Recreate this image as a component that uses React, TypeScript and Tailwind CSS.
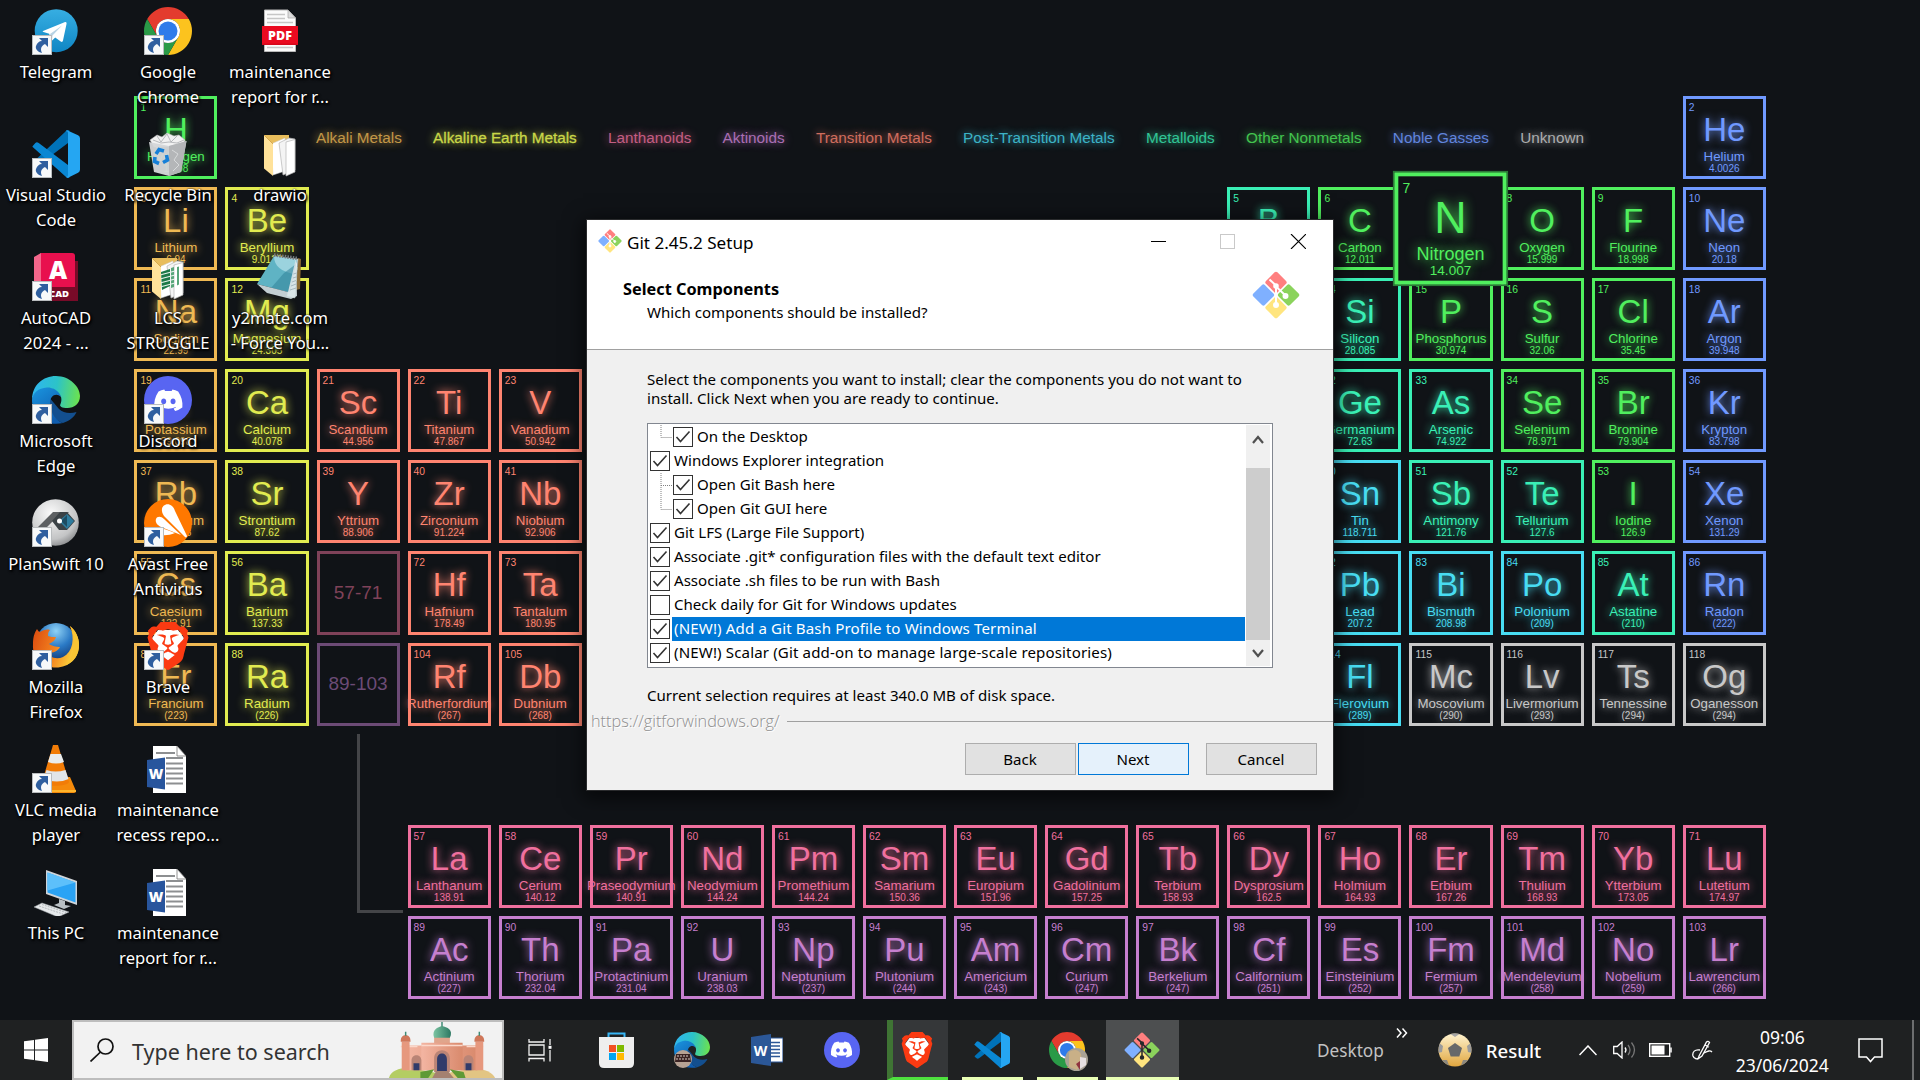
import type { ReactNode } from "react";
import { FaDiscord } from "react-icons/fa6";
import { SiBrave } from "react-icons/si";

type Kind = "alkali" | "earth" | "trans" | "lanth" | "act" | "post" | "metalloid" | "nonmetal" | "noble" | "unknown";

const tone: Record<Kind, string> = {
  alkali: "text-[#efb953]",
  earth: "text-[#e1eb50]",
  trans: "text-[#ff8470]",
  lanth: "text-[#f0709e]",
  act: "text-[#c67fcf]",
  post: "text-[#48dcf2]",
  metalloid: "text-[#3af0b6]",
  nonmetal: "text-[#50ef5e]",
  noble: "text-[#7099ff]",
  unknown: "text-[#c8c8c8]",
};

type El = [number, string, string, string, Kind];

const series = (first: number, kind: Kind, list: [string, string, string][]): El[] =>
  list.map(([s, n, m], i) => [first + i, s, n, m, kind]);

const lanthanoids = series(57, "lanth", [["La", "Lanthanum", "138.91"], ["Ce", "Cerium", "140.12"], ["Pr", "Praseodymium", "140.91"], ["Nd", "Neodymium", "144.24"], ["Pm", "Promethium", "144.24"], ["Sm", "Samarium", "150.36"], ["Eu", "Europium", "151.96"], ["Gd", "Gadolinium", "157.25"], ["Tb", "Terbium", "158.93"], ["Dy", "Dysprosium", "162.5"], ["Ho", "Holmium", "164.93"], ["Er", "Erbium", "167.26"], ["Tm", "Thulium", "168.93"], ["Yb", "Ytterbium", "173.05"], ["Lu", "Lutetium", "174.97"]]);
const actinoids = series(89, "act", [["Ac", "Actinium", "(227)"], ["Th", "Thorium", "232.04"], ["Pa", "Protactinium", "231.04"], ["U", "Uranium", "238.03"], ["Np", "Neptunium", "(237)"], ["Pu", "Plutonium", "(244)"], ["Am", "Americium", "(243)"], ["Cm", "Curium", "(247)"], ["Bk", "Berkelium", "(247)"], ["Cf", "Californium", "(251)"], ["Es", "Einsteinium", "(252)"], ["Fm", "Fermium", "(257)"], ["Md", "Mendelevium", "(258)"], ["No", "Nobelium", "(259)"], ["Lr", "Lawrencium", "(266)"]]);

/* A number is a run of empty columns, a string is a placeholder cell. */
const rows: (El | number | string)[][] = [
  [[1, "H", "Hydrogen", "1.008", "nonmetal"], 16, [2, "He", "Helium", "4.0026", "noble"]],
  [[3, "Li", "Lithium", "6.94", "alkali"], [4, "Be", "Beryllium", "9.0122", "earth"], 10, [5, "B", "Boron", "10.81", "metalloid"], [6, "C", "Carbon", "12.011", "nonmetal"], [7, "N", "Nitrogen", "14.007", "nonmetal"], [8, "O", "Oxygen", "15.999", "nonmetal"], [9, "F", "Flourine", "18.998", "nonmetal"], [10, "Ne", "Neon", "20.18", "noble"]],
  [[11, "Na", "Sodium", "22.99", "alkali"], [12, "Mg", "Magnesium", "24.305", "earth"], 11, [14, "Si", "Silicon", "28.085", "metalloid"], [15, "P", "Phosphorus", "30.974", "nonmetal"], [16, "S", "Sulfur", "32.06", "nonmetal"], [17, "Cl", "Chlorine", "35.45", "nonmetal"], [18, "Ar", "Argon", "39.948", "noble"]],
  [[19, "K", "Potassium", "39.098", "alkali"], [20, "Ca", "Calcium", "40.078", "earth"], [21, "Sc", "Scandium", "44.956", "trans"], [22, "Ti", "Titanium", "47.867", "trans"], [23, "V", "Vanadium", "50.942", "trans"], 8, [32, "Ge", "Germanium", "72.63", "metalloid"], [33, "As", "Arsenic", "74.922", "metalloid"], [34, "Se", "Selenium", "78.971", "nonmetal"], [35, "Br", "Bromine", "79.904", "nonmetal"], [36, "Kr", "Krypton", "83.798", "noble"]],
  [[37, "Rb", "Rubidium", "85.468", "alkali"], [38, "Sr", "Strontium", "87.62", "earth"], [39, "Y", "Yttrium", "88.906", "trans"], [40, "Zr", "Zirconium", "91.224", "trans"], [41, "Nb", "Niobium", "92.906", "trans"], 8, [50, "Sn", "Tin", "118.711", "post"], [51, "Sb", "Antimony", "121.76", "metalloid"], [52, "Te", "Tellurium", "127.6", "metalloid"], [53, "I", "Iodine", "126.9", "nonmetal"], [54, "Xe", "Xenon", "131.29", "noble"]],
  [[55, "Cs", "Caesium", "132.91", "alkali"], [56, "Ba", "Barium", "137.33", "earth"], "57-71", [72, "Hf", "Hafnium", "178.49", "trans"], [73, "Ta", "Tantalum", "180.95", "trans"], 8, [82, "Pb", "Lead", "207.2", "post"], [83, "Bi", "Bismuth", "208.98", "post"], [84, "Po", "Polonium", "(209)", "post"], [85, "At", "Astatine", "(210)", "metalloid"], [86, "Rn", "Radon", "(222)", "noble"]],
  [[87, "Fr", "Francium", "(223)", "alkali"], [88, "Ra", "Radium", "(226)", "earth"], "89-103", [104, "Rf", "Rutherfordium", "(267)", "trans"], [105, "Db", "Dubnium", "(268)", "trans"], 8, [114, "Fl", "Flerovium", "(289)", "post"], [115, "Mc", "Moscovium", "(290)", "unknown"], [116, "Lv", "Livermorium", "(293)", "unknown"], [117, "Ts", "Tennessine", "(294)", "unknown"], [118, "Og", "Oganesson", "(294)", "unknown"]],
  [2, "bracket", 15],
  [2, ...lanthanoids],
  [3, ...actinoids],
];

const legend: [string, string][] = [
  ["Alkali Metals", "text-[#efb953] opacity-80"],
  ["Alkaline Earth Metals", "text-[#c9d748] [-webkit-text-stroke:0.3px_currentColor]"],
  ["Lanthanoids", "text-[#f0709e] opacity-80"],
  ["Aktinoids", "text-[#c67fcf] opacity-85"],
  ["Transition Metals", "text-[#ff8470] opacity-80"],
  ["Post-Transition Metals", "text-[#48dcf2] opacity-80"],
  ["Metalloids", "text-[#3af0b6] opacity-80"],
  ["Other Nonmetals", "text-[#50ef5e] opacity-80"],
  ["Noble Gasses", "text-[#7099ff] opacity-85"],
  ["Unknown", "text-[#c8c8c8] opacity-85"],
];

function Cell({ el }: { el: El }) {
  const [n, sym, name, mass, kind] = el;
  const active = sym === "N";
  return (
    <div
      className={`${tone[kind]} flex min-w-0 flex-col border-3 border-current bg-[#101317] text-center whitespace-nowrap ${active ? "relative z-10 scale-[1.355] outline-1 outline-[#2c7a38]" : ""}`}
    >
      <div className="h-3 pl-[3px] text-left text-[10.3px] leading-[17px]">{n}</div>
      <div className="text-[33px] leading-[38px] [text-shadow:0_0_9px_currentColor]">{sym}</div>
      <div className="flex justify-center text-[13.3px] leading-[15px] [text-shadow:0_0_9px_currentColor]">
        <span>{name}</span>
      </div>
      <div className="text-[10px] leading-[10px] [text-shadow:0_0_9px_currentColor]">{mass}</div>
    </div>
  );
}

const spans: Record<number, string> = {
  2: "col-span-2",
  3: "col-span-3",
  8: "col-span-8",
  10: "col-span-10",
  11: "col-span-11",
  15: "col-span-15",
  16: "col-span-16",
};

function PeriodicTable() {
  return (
    <div className="absolute top-[96px] left-[134.4px] h-[903px] w-[1631.4px] font-['Liberation_Sans',sans-serif]">
      <div className="grid h-full grid-cols-18 grid-rows-10 gap-2">
        {rows.map((r, i) =>
          r.map((c, j) => {
            const key = `${i}-${j}`;
            if (typeof c === "number") return <div key={key} className={spans[c]} />;
            if (c === "bracket")
              return <div key={key} className="row-span-2 mr-[-3px] mb-[-5px] ml-[40px] border-b-3 border-l-3 border-[#444548]" />;
            if (typeof c === "string")
              return (
                <div
                  key={key}
                  className={`flex items-center justify-center border-3 border-current text-[19px] ${c === "57-71" ? "text-[#7f4259]" : "text-[#6c4b76]"}`}
                >
                  {c}
                </div>
              );
            return <Cell key={key} el={c} />;
          }),
        )}
      </div>
      <div className="absolute top-[31px] left-[181.6px] flex w-[1268px] justify-between text-[15.3px] leading-[22px] whitespace-nowrap">
        {legend.map(([t, c]) => (
          <span key={t} className={`${c} [text-shadow:0_0_8px_currentColor]`}>
            {t}
          </span>
        ))}
      </div>
    </div>
  );
}

/* ---------- icons ---------- */

function Svg({ children, className = "size-12", box = "0 0 48 48" }: { children: ReactNode; className?: string; box?: string }) {
  return (
    <svg viewBox={box} className={className}>
      {children}
    </svg>
  );
}

function Telegram() {
  return (
    <Svg>
      <defs>
        <linearGradient id="tg" x1="0" y1="0" x2="0" y2="1">
          <stop offset="0" stopColor="#37aee2" />
          <stop offset="1" stopColor="#0f86c4" />
        </linearGradient>
      </defs>
      <circle cx="24.2" cy="23.7" r="21.5" fill="url(#tg)" />
      <path d="M11 24 32.5 15.2c1.6-.6 2.3.2 2 1.7L31 33.6c-.3 1.4-1.2 1.6-2.3.9l-5.5-4-2.8 2.7c-.6.6-1.3.5-1.5-.4l-1.7-6-5.7-1.7c-1-.3-1-.8-.5-1.1Z" fill="#fff" />
      <path d="m18 27 12-8.5-9.5 10-.5 4.500Z" fill="#b8d3e4" />
    </Svg>
  );
}

function Chrome({ className = "size-12" }: { className?: string }) {
  return (
    <Svg className={className}>
      <path d="M24 12H44.78A24 24 0 0 0 3.22 12L13.61 30A12 12 0 0 1 24 12Z" fill="#e33b2e" />
      <path d="M44.78 12A24 24 0 0 1 24 48L34.39 30A12 12 0 0 0 24 12Z" fill="#fcc31e" />
      <path d="M24 48A24 24 0 0 1 3.22 12L13.61 30A12 12 0 0 0 34.39 30Z" fill="#2a9a47" />
      <circle cx="24" cy="24" r="12" fill="#fff" />
      <circle cx="24" cy="24" r="9.5" fill="#2f7bea" />
    </Svg>
  );
}

function Pdf() {
  return (
    <Svg>
      <path d="M8.5 3H32l7.5 8v33.5h-31Z" fill="#fbfbfb" stroke="#b9b9b9" />
      <path d="M32 3v8h7.5Z" fill="#dcdcdc" stroke="#a5a5a5" strokeWidth=".7" />
      <path d="M11 7.5h18M11 11.5h18M11 15.5h26M11 40.5h26" stroke="#c6c6c6" strokeWidth="1.3" />
      <rect x="6" y="19" width="36" height="19" fill="#d6071b" />
      <rect x="6" y="19" width="36" height="17.5" fill="#ea0a20" />
      <text x="24" y="32.8" textAnchor="middle" fontSize="12.5" fontWeight="800" fill="#fff" fontFamily="Open Sans, sans-serif">PDF</text>
    </Svg>
  );
}

function VsCode({ className = "size-12" }: { className?: string }) {
  return (
    <Svg className={className} box="0 0 100 100">
      <path d="M2 67 71 2Q74-1 78 1L75 27 14 73Q10 75 7 73L2 69Z" fill="#0072b8" />
      <path d="M2 33 7 27Q10 24 14 27L75 73 78 99Q74 101 71 98L2 36Q0 35 2 33Z" fill="#0a87d3" />
      <path d="M74 1 96 11Q100 13 100 17V83Q100 87 96 89L76 99Q72 100 70 97 75 99 75 94V6Q75 1 70 3Q72 0 74 1Z" fill="#25a6f2" />
    </Svg>
  );
}

function RecycleBin() {
  return (
    <Svg>
      <path d="m6 10 7-5 5 2 5-4 7 3 5-1 6 5-2 6-29 1Z" fill="#f1f1f1" stroke="#bbb" strokeWidth=".6" />
      <path d="m13 6 4 6 6-8 4 8 6-6M9 10l8 3 8-1 8 1 7-3" stroke="#a8abae" strokeWidth=".8" fill="none" />
      <path d="m5 12 20 4 17.5-5-5.5 31-12 4-15-4Z" fill="#d4d6d8" opacity=".96" />
      <path d="m25 16 17.5-5-5.5 31-12 4Z" fill="#b4b6b8" />
      <path d="m28 20 6 4-4 6 5 5-6 6M11 16l5 4-4 5" stroke="#d8dadb" fill="none" />
      <g fill="none" stroke="#1680d8" strokeWidth="3.6">
        <path d="m12 24 3-4.500 5 1.500M22.500 25l1 5-4.500 2.500M15 33.500l-4.500-2 .5-4.500" />
      </g>
    </Svg>
  );
}

function Folder({ sheet = false }: { sheet?: boolean }) {
  return (
    <Svg>
      <path d="M8 5h25v34H16Z" fill="#e8bd5c" />
      <path d="m15 14 14-6v33l-12 4Z" fill="#fff" stroke="#ccc" strokeWidth=".5" />
      <path d="m23 13 10-5 6 1v31l-12 5Z" fill="#f4f4f4" stroke="#b5b5b5" strokeWidth=".7" />
      <path d="m30 12 9-2.500V42l-9 4Z" fill="#fff" stroke="#b5b5b5" strokeWidth=".7" />
      {sheet && (
        <>
          <path d="m17 19 9-3v17l-8 4Z" fill="#1d7a48" />
          <path d="m27 15 3-1v20l-3 1ZM33 14l2-.5v18l-2 1Z" fill="#58a67a" />
          <path d="m16 22 15-4M16 26l15-4M16 30l15-4M16 34l15-4" stroke="#e9f3ed" strokeWidth="1.2" />
        </>
      )}
      <path d="m8 5 9 9v32L8 38.500Z" fill="#ffe29a" />
      <path d="m8 5 9 9" stroke="#d6a94d" />
    </Svg>
  );
}

function AutoCad() {
  return (
    <Svg>
      <path d="m38 8 8 0v40H13V34Z" fill="#780b28" />
      <path d="M9 0h31q3 0 3 3v31H2V6Z" fill="#e8104e" />
      <path d="M2 4 9 0v34H2Z" fill="#f3668b" />
      <text x="26" y="26" textAnchor="middle" fontSize="25" fontWeight="800" fill="#fff" fontFamily="Open Sans, sans-serif">A</text>
      <text x="27" y="43.5" textAnchor="middle" fontSize="9.5" fontWeight="800" fill="#fff" fontFamily="Open Sans, sans-serif">CAD</text>
    </Svg>
  );
}

function Notepad() {
  return (
    <Svg>
      <path d="M42 5l3 1-1 30-4 1Z" fill="#8a6a35" />
      <path d="m17 3 25 3-3 39-8-2 8-34Z" fill="#e8edef" stroke="#9aa" strokeWidth=".6" />
      <path d="M18 3 41 7 32 39 1 31Z" fill="#5fb3c4" />
      <path d="M18 3 41 7l-4 14C26 18 18 14 18 3Z" fill="#9bd3de" />
      <path d="m28 20 12-9-6 28-19-4Z" fill="#2f8299" opacity=".55" />
      <path d="m1 31 31 8 8-34 1 38-6 3-24-6Z" fill="#d7e3e7" opacity=".9" />
      <path d="m35 33 5-2M36 29l4-1.500M37 25l3-1M37.500 21l3-1M34 37l6-2" stroke="#8fa5ad" strokeWidth=".7" />
      <path d="M18 2l24 3.500" stroke="#767c80" strokeWidth="3.5" strokeDasharray="1.5 1.2" />
    </Svg>
  );
}

function Edge({ className = "size-12", id = "e" }: { className?: string; id?: string }) {
  return (
    <Svg className={className}>
      <defs>
        <linearGradient id={`${id}1`} x1="0" y1=".4" x2="1" y2=".5">
          <stop offset="0" stopColor="#2fb5f0" />
          <stop offset=".5" stopColor="#2cc3c8" />
          <stop offset="1" stopColor="#6be24f" />
        </linearGradient>
        <linearGradient id={`${id}2`} x1="0" y1="0" x2=".6" y2="1">
          <stop offset="0" stopColor="#1a96e0" />
          <stop offset="1" stopColor="#0f5cae" />
        </linearGradient>
      </defs>
      <path d="M16 20C13 34 22 44 31 47 38 45 43 40 44.5 36 38 38 31 37 27 33Z" fill="#134f8f" />
      <path d="M0 24C1 14 9 10 17 11 25 12 29 17 29 21 24 16 18 20 18 27 18 37 25 46 31 47 13 51 0 39 0 24Z" fill={`url(#${id}2)`} />
      <path d="M0 24C0 9 11 0 24 0 38 0 48 11 48 20 48 28 42 32 35.5 32 30 32 27 30.5 28.5 28 32 21 26 11.5 15 11.5 6 12 1 17 0 24Z" fill={`url(#${id}1)`} />
    </Svg>
  );
}

function Discord({ className = "size-12" }: { className?: string }) {
  return (
    <div className={`${className} flex items-center justify-center rounded-full bg-[#5865f2] text-white`}>
      <FaDiscord className="size-[64%]" />
    </div>
  );
}

function PlanSwift() {
  return (
    <Svg>
      <defs>
        <radialGradient id="ps" cx=".4" cy=".3" r=".8">
          <stop offset="0" stopColor="#fafafa" />
          <stop offset=".7" stopColor="#c3c4c5" />
          <stop offset="1" stopColor="#77797b" />
        </radialGradient>
      </defs>
      <circle cx="23.5" cy="23.5" r="23.3" fill="url(#ps)" />
      <path d="m6 28 15-15h16l-5 5h-7l-10 10Z" fill="#5d6062" />
      <path d="m20 22 8-9h7l8 9-8 9h-8Z" fill="#3b4246" />
      <path d="m27 22 8-7 7 7-7 8Z" fill="#2e7c9e" />
      <path d="m29 22 6-6v12Z" fill="#1d4c62" />
      <circle cx="27.5" cy="22" r="2.5" fill="#fff" />
    </Svg>
  );
}

function Avast() {
  return (
    <Svg>
      <circle cx="24" cy="24" r="24" fill="#ff7800" />
      <path d="M18 12c-1-5 5-9 10-5 1 1 2 2 3 5l12 25c0 1-1 2-2 1L20 17c-1-2-2-3-2-5Z" fill="#fff" />
      <path d="M12 20c1-3 5-3 8 0l17 16-20-8c-4-2-6-5-5-8Z" fill="#fff" />
      <path d="M12 30c4-2 9 0 19 4-7 3-15 3-18 0Z" fill="#fff" />
    </Svg>
  );
}

function Firefox() {
  return (
    <Svg>
      <defs>
        <radialGradient id="ff" cx=".5" cy=".2" r=".8">
          <stop offset="0" stopColor="#8fd2f5" />
          <stop offset=".5" stopColor="#2a79c5" />
          <stop offset="1" stopColor="#12346f" />
        </radialGradient>
        <linearGradient id="ff2" x1="0" y1="0" x2="1" y2=".3">
          <stop offset="0" stopColor="#d9480f" />
          <stop offset=".6" stopColor="#f5851f" />
          <stop offset="1" stopColor="#fbd03c" />
        </linearGradient>
      </defs>
      <circle cx="24" cy="21" r="20" fill="url(#ff)" />
      <path d="M38 4c6 5 9 12 9 19 0 13-10 22.500-23 22.500S0 37 1 22C1 14 3 10 5 7c1 2 2 3 3 3 3-2 7-3 10-2-2 2-2 4-2 6 2 1 5 1 8 1-1 4-4 5-7 7 3 2 7 3 11 3-4 7-11 6-14 4 2 6 10 9 17 6 10-5 12-19 7-31Z" fill="url(#ff2)" />
      <path d="M38 4c6 5 9 12 9 19 0 10-5 17-13 20 8-8 11-26 4-39Z" fill="#f9c534" />
    </Svg>
  );
}

function Brave({ className = "size-12" }: { className?: string }) {
  return (
    <div className={`${className} relative shrink-0`}>
      <svg viewBox="0 0 24 24" className="size-full">
        <path d="M7 4h10l3 4-1.500 8-6.500 6-6.500-6L4 8Z" fill="#fff" />
      </svg>
      <SiBrave className="absolute inset-0 size-full text-[#fb3a12]" />
    </div>
  );
}

function Vlc() {
  return (
    <Svg>
      <path d="M7 33h5l-1 6h24l-2-7h5l6 14q0 2-2 2H6q-2 0-2-2Z" fill="#f58a0b" />
      <path d="M4 45h40l0 2H4Z" fill="#ffb52b" />
      <path d="M21 0h5l11 37c-2 5-25 5-27 0Z" fill="#f27c07" />
      <path d="m18.500 9 10.500 0 3 8q-8 3-16 0Z" fill="#e9ecee" />
      <path d="m14.500 25q9 3 19 0l3 9q-11 5-25 0Z" fill="#e1e5e8" />
    </Svg>
  );
}

function WordDoc() {
  return (
    <Svg>
      <path d="M9 0h24l9 10v37H9Z" transform="translate(0 1)" fill="#fff" />
      <path d="M33 1v10h9Z" fill="#fff" stroke="#777" strokeWidth=".8" />
      <path d="M12 8h19M22 13h17M22 18.500h17M22 23.500h17M22 28.500h17M22 33.500h17M22 38.500h17" stroke="#8d8f91" strokeWidth="2" />
      <path d="M3 15 21 12.500v32L3 42Z" fill="#28559d" />
      <text x="12" y="33.5" textAnchor="middle" fontSize="14" fontWeight="800" fill="#fff" fontFamily="Open Sans, sans-serif">W</text>
    </Svg>
  );
}

function ThisPc() {
  return (
    <Svg>
      <path d="m14 2 31 11v24L14 26Z" fill="#cfd5da" />
      <path d="m15.500 4.500 28 10v20l-28-10Z" fill="#2aa3f5" />
      <path d="m15.500 4.500 28 10-28 8Z" fill="#5dc0fb" />
      <path d="m27 31 6 2v4l6 1-7 3-10-4 5-2Z" fill="#b9c0c5" />
      <path d="m10 35 27 9-11 5L2 39Z" fill="#e6e9eb" stroke="#a3a9ad" strokeWidth=".5" />
      <path d="m7 38 24 8M10 36.500l24 8" stroke="#a9afb3" strokeWidth=".8" strokeDasharray="2 1" />
    </Svg>
  );
}

function GitLogo({ className = "size-12", line = "#fff" }: { className?: string; line?: string }) {
  return (
    <Svg className={className}>
      <g transform="rotate(45 24 24)">
        <rect x="7" y="7" width="16.2" height="16.2" rx="2" fill="#ff7f7f" />
        <rect x="7" y="24.8" width="16.2" height="16.2" rx="2" fill="#7fb0ff" />
        <rect x="24.8" y="7" width="16.2" height="16.2" rx="2" fill="#8bd35c" />
        <rect x="24.8" y="24.8" width="16.2" height="16.2" rx="2" fill="#ffe57f" />
      </g>
      <g stroke={line} fill={line} strokeWidth="2">
        <path d="m17.500 8.500 6.500 6v20M25 16.500l8.500 8" fill="none" />
        <circle cx="24" cy="15" r="1.8" />
        <circle cx="33.5" cy="25" r="2" />
        <circle cx="24" cy="34" r="2" />
      </g>
    </Svg>
  );
}

/* ---------- desktop ---------- */

type Shortcut = { icon: ReactNode; lines: string[]; link?: boolean };

const columns: Shortcut[][] = [
  [
    { icon: <Telegram />, lines: ["Telegram"], link: true },
    { icon: <VsCode />, lines: ["Visual Studio", "Code"], link: true },
    { icon: <AutoCad />, lines: ["AutoCAD", "2024 - ..."], link: true },
    { icon: <Edge id="de" />, lines: ["Microsoft", "Edge"], link: true },
    { icon: <PlanSwift />, lines: ["PlanSwift 10"], link: true },
    { icon: <Firefox />, lines: ["Mozilla", "Firefox"], link: true },
    { icon: <Vlc />, lines: ["VLC media", "player"], link: true },
    { icon: <ThisPc />, lines: ["This PC"] },
  ],
  [
    { icon: <Chrome />, lines: ["Google", "Chrome"], link: true },
    { icon: <RecycleBin />, lines: ["Recycle Bin"] },
    { icon: <Folder sheet />, lines: ["LCS", "STRUGGLE"] },
    { icon: <Discord />, lines: ["Discord"], link: true },
    { icon: <Avast />, lines: ["Avast Free", "Antivirus"], link: true },
    { icon: <Brave />, lines: ["Brave"], link: true },
    { icon: <WordDoc />, lines: ["maintenance", "recess repo..."] },
    { icon: <WordDoc />, lines: ["maintenance", "report for r..."] },
  ],
  [
    { icon: <Pdf />, lines: ["maintenance", "report for r..."] },
    { icon: <Folder />, lines: ["drawio"] },
    { icon: <Notepad />, lines: ["y2mate.com", "- Force You..."] },
  ],
];

function DesktopIcons() {
  return (
    <div className="absolute top-0 left-0 z-20 flex font-['Noto_Sans',sans-serif] text-[16.6px] leading-[25px] text-white">
      {columns.map((col, i) => (
        <div key={i} className="flex w-28 flex-col">
          {col.map((s, j) => (
            <div key={j} className="flex h-[123px] flex-col items-center pt-[7px]">
              <div className="relative flex size-12 justify-center">
                {s.icon}
                {s.link && (
                  <svg viewBox="0 0 20 20" className="absolute bottom-0 left-0 size-5">
                    <rect x=".5" y=".5" width="19" height="19" fill="#f7f9fa" stroke="#b9bcbe" />
                    <path d="M7 3h9v9l-3-3c-4 2-5 5-3 9-4-1-7-4-6-7 1-3 3-5 6-5Z" fill="#2f5f9f" />
                  </svg>
                )}
              </div>
              <div className="mt-[3.5px] text-center whitespace-nowrap [text-shadow:0_0_2px_#000,1px_1px_2px_#000,1px_2px_3px_#000]">
                {s.lines.map((l) => (
                  <div key={l}>{l}</div>
                ))}
              </div>
            </div>
          ))}
        </div>
      ))}
    </div>
  );
}

/* ---------- installer window ---------- */

const items: { t: string; child?: "mid" | "last"; off?: boolean; sel?: boolean }[] = [
  { t: "On the Desktop", child: "last" },
  { t: "Windows Explorer integration" },
  { t: "Open Git Bash here", child: "mid" },
  { t: "Open Git GUI here", child: "last" },
  { t: "Git LFS (Large File Support)" },
  { t: "Associate .git* configuration files with the default text editor" },
  { t: "Associate .sh files to be run with Bash" },
  { t: "Check daily for Git for Windows updates", off: true },
  { t: "(NEW!) Add a Git Bash Profile to Windows Terminal", sel: true },
  { t: "(NEW!) Scalar (Git add-on to manage large-scale repositories)" },
];

function Installer() {
  return (
    <div className="absolute top-[220px] left-[587px] z-30 flex h-[570px] w-[746px] flex-col bg-[#f0f0f0] font-['Noto_Sans',sans-serif] text-[15.08px] text-black shadow-[0_0_0_1px_#2a2b2d,0_4px_18px_4px_rgba(0,0,0,0.6)]">
      <div className="h-[130px] border-b border-[#a0a0a0] bg-white">
        <div className="flex h-[45px] items-center pr-[27px] pl-[11px]">
          <GitLogo className="mb-1 size-6" />
          <span className="ml-[5px] text-[17.1px] leading-[24px]">Git 2.45.2 Setup</span>
          <svg viewBox="0 0 155 15" className="mb-[2px] ml-auto h-[15px] w-[155px]" fill="none">
            <path d="M0 7.500h15" stroke="#000" />
            <rect x="69.5" y=".5" width="14" height="14" stroke="#c9c9c9" />
            <path d="m140 0 15 15m0-15-15 15" stroke="#000" strokeWidth="1.1" />
          </svg>
        </div>
        <div className="flex justify-between pr-[33px] pl-9">
          <div className="pt-[13px]">
            <div className="text-[16.3px] leading-[23px] font-bold">Select Components</div>
            <div className="pl-6 leading-[23px]">Which components should be installed?</div>
          </div>
          <GitLogo className="mt-[6px] size-12" />
        </div>
      </div>
      <div className="px-[60px] pt-5 leading-[19px] whitespace-nowrap">
        Select the components you want to install; clear the components you do not want to
        <br />
        install. Click Next when you are ready to continue.
      </div>
      <div className="mt-[15px] ml-[60px] flex h-[245px] w-[626px] border border-[#828790] bg-white p-px pr-[2px]">
        <div className="flex flex-1 flex-col pr-px">
          {items.map((it) => (
            <div key={it.t} className="flex h-6 items-center">
              {it.child && (
                <svg viewBox="0 0 23 24" className="-mr-px h-6 w-[24px] shrink-0" fill="none" stroke="#808080" strokeDasharray="1 1">
                  <path d={it.child === "mid" ? "M11.500 0v24M11.500 12.500H23" : "M11.500 0v12.500H23"} />
                </svg>
              )}
              <svg viewBox="0 0 20 20" className="ml-px size-5 shrink-0" fill="none">
                <rect x=".5" y=".5" width="19" height="19" fill="#fff" stroke="#333" />
                {!it.off && <path d="m3.500 10 4 4.500 9-10" stroke="#333" strokeWidth="1.6" />}
              </svg>
              <span className={`ml-[2px] flex h-6 items-center pb-px pl-[2px] whitespace-nowrap ${it.t.startsWith("(NEW") ? "tracking-[0.13px]" : ""} ${it.sel ? "flex-1 bg-[#0078d7] text-white" : ""}`}>{it.t}</span>
            </div>
          ))}
        </div>
        <div className="flex w-6 flex-col items-center bg-[#f0f0f0]">
          <svg viewBox="0 0 24 43" className="h-[43px] w-6">
            <path d="m7 18 5-6 5 6" fill="none" stroke="#505050" strokeWidth="2.2" />
          </svg>
          <div className="h-[172px] w-6 bg-[#cdcdcd]" />
          <svg viewBox="0 0 24 26" className="h-[26px] w-6">
            <path d="m7 10 5 6 5-6" fill="none" stroke="#505050" strokeWidth="2.2" />
          </svg>
        </div>
      </div>
      <div className="mt-[17px] pl-[60px] leading-[20px]">Current selection requires at least 340.0 MB of disk space.</div>
      <div className="mt-[6px] flex items-center pl-1">
        <span className="font-['Open_Sans',sans-serif] text-[16.3px] leading-[20px] font-light text-[#8f8f8f] [text-shadow:1px_1px_0_#fff]">https://gitforwindows.org/</span>
        <div className="ml-[7px] h-px flex-1 bg-[#a0a0a0]" />
      </div>
      <div className="mt-[12px] flex justify-end pr-4">
        <button className="h-8 w-[111px] border border-[#adadad] bg-[#e1e1e1] pr-px">Back</button>
        <button className="ml-[2px] h-8 w-[111px] border border-[#0078d7] bg-[#e5f1fb] pr-px">Next</button>
        <button className="ml-[17px] h-8 w-[111px] border border-[#adadad] bg-[#e1e1e1] pr-px">Cancel</button>
      </div>
    </div>
  );
}

/* ---------- taskbar ---------- */

function Mosque() {
  return (
    <svg viewBox="0 0 108 57" className="mt-auto h-[57px] w-[108px]">
      <defs>
        <linearGradient id="wall" x1="0" x2="1">
          <stop offset="0" stopColor="#f3b5a2" />
          <stop offset="1" stopColor="#d98a6d" />
        </linearGradient>
        <linearGradient id="dome" x1="0" x2="1">
          <stop offset="0" stopColor="#7cc4a2" />
          <stop offset="1" stopColor="#2c7862" />
        </linearGradient>
      </defs>
      <path d="M0 57C2 49 12 46 24 47l30 6v4Z" fill="#b4cd63" />
      <path d="M108 57c-3-7-14-11-28-9l-26 5v4Z" fill="#e2c583" />
      <path d="M54 0v8" stroke="#3d8a74" strokeWidth="1.5" />
      <path d="M46 15h16v7H46Z" fill="#e0a58c" />
      <path d="M46 16c-3-8 4-11 8-12 5 1 12 4 8 12Z" fill="url(#dome)" />
      <path d="M18 24h72v25H18Z" fill="url(#wall)" />
      <path d="M33 21h42v28H33Z" fill="url(#wall)" />
      <path d="M12 25h17M79 25h17M33 24h42" stroke="#fbd8ca" strokeWidth="1.5" />
      <path d="M13 20h8v29h-8ZM88 20h8v29h-8Z" fill="#e6987e" />
      <path d="M12 20c0-5 2-6 5-7 3 1 5 2 5 7ZM87 20c0-5 2-6 5-7 3 1 5 2 5 7Z" fill="#cf775a" />
      <path d="M17 10v4M92 10v4" stroke="#3d8a74" strokeWidth="1.5" />
      <path d="M46 51V37c0-11 16-11 16 0v14ZM23 49V39c0-7 10-7 10 0v10ZM76 49V39c0-7 10-7 10 0v10Z" fill="#b98476" />
      <path d="M49 51V38c0-8 10-8 10 0v13ZM25 49v-7h6v7ZM78 49v-7h6v7Z" fill="#303b6a" />
      <path d="M44 57l4-7h12l6 7Z" fill="#a48170" />
      <path d="m32 51 14-3-6 9h-8ZM76 51l-14-3 8 9h8Z" fill="#5f9a35" />
    </svg>
  );
}

function Taskbar() {
  return (
    <div className="absolute bottom-0 left-0 z-40 flex h-[60px] w-full items-center bg-[#1f2122] font-['Noto_Sans',sans-serif] text-white">
      <div className="flex w-[72px] justify-center">
        <svg viewBox="0 0 24 24" className="size-6" fill="#fff">
          <path d="M0 3.300 10 2v9.500H0ZM11 1.800 24 0v11.500H11ZM0 12.500h10V22L0 20.700ZM11 12.500h13V24l-13-1.800Z" />
        </svg>
      </div>
      <div className="flex h-full w-[432px] items-center border-2 border-[#bdbdbd] bg-[#f2f2f2] pl-4">
        <svg viewBox="0 0 24 24" className="size-6" fill="none" stroke="#111" strokeWidth="1.7">
          <circle cx="15.5" cy="8.5" r="7.5" />
          <path d="M10.500 14 .5 23.500" />
        </svg>
        <span className="mt-[4px] ml-[18px] text-[21.5px] text-[#333]">Type here to search</span>
        <div className="mr-[6px] ml-auto flex h-full flex-col">
          <Mosque />
        </div>
      </div>
      <svg viewBox="0 0 24 24" className="ml-[24px] size-6" fill="none" stroke="#f2f2f2" strokeWidth="1.3">
        <path d="M1 1v3h15V1M1 23.500v-3h15v3M1 7h15v10H1ZM22 1v6M22 12v11.500" />
        <rect x="20.5" y="7.8" width="3" height="3" fill="#fff" stroke="none" />
      </svg>
      <svg viewBox="0 0 35 36" className="ml-[47px] h-9 w-[35px]">
        <path d="M9.500 8V1.500h16V8" fill="none" stroke="#38b6f5" strokeWidth="2" />
        <path d="M0 5h35v26q0 5-5 5H5q-5 0-5-5Z" fill="#eeeeee" />
        <path d="M10 13h7v7h-7Z" fill="#f25022" />
        <path d="M18 13h7v7h-7Z" fill="#7fba00" />
        <path d="M10 21h7v7h-7Z" fill="#00a4ef" />
        <path d="M18 21h7v7h-7Z" fill="#ffb900" />
      </svg>
      <div className="relative ml-[40px] size-9">
        <Edge className="size-9" id="te" />
        <svg viewBox="0 0 18 18" className="absolute bottom-0 left-0 size-[18px]">
          <circle cx="9" cy="9" r="9" fill="#b7a294" />
          <path d="M2 4h14l1 8H1Z" fill="#3a2323" />
          <path d="M3 6h12M2 9h14" stroke="#d8c9c4" strokeWidth="1.2" strokeDasharray="2 1" />
        </svg>
      </div>
      <svg viewBox="0 0 32 32" className="ml-[41px] size-8">
        <path d="M17 4h15v24H17Z" fill="#fff" stroke="#2b5797" strokeWidth="1.2" />
        <path d="M19 8.500h10M19 12h10M19 15.500h10M19 19h10M19 22.500h10" stroke="#2b5797" strokeWidth="1.7" />
        <path d="m0 3 20-3v32L0 29Z" fill="#2b5797" />
        <text x="9.5" y="21.5" textAnchor="middle" fontSize="14" fontWeight="700" fill="#fff" fontFamily="Open Sans, sans-serif">W</text>
      </svg>
      <Discord className="ml-[41px] size-9" />
      <div className="ml-[27px] flex h-full w-[61px] items-center justify-center border-b-3 border-l-6 border-b-[#4fe23f] border-l-[#3f7434] bg-[#353739] pt-[3px]">
        <Brave className="-ml-[7px] size-9" />
      </div>
      <div className="ml-[14px] flex h-full w-[61px] items-center justify-center border-b-3 border-[#e9ffb5] pt-[3px]">
        <VsCode className="-ml-[1px] size-9" />
      </div>
      <div className="ml-[14px] flex h-full w-[61px] items-center justify-center border-b-3 border-[#e9ffb5] pt-[3px]">
        <div className="relative -ml-[1px] size-9">
          <Chrome className="size-9" />
          <svg viewBox="0 0 23 23" className="absolute -right-[3px] -bottom-[3px] size-[23px]">
            <circle cx="11.5" cy="11.5" r="11.5" fill="#a9a295" />
            <path d="M4 4q8-5 12 2l1 9-5 7-8-3Z" fill="#c9b087" />
            <path d="m15 9 6 1v7l-6 4Z" fill="#e6dfe0" />
            <path d="m11 16 4-3v9Z" fill="#8f3340" />
          </svg>
        </div>
      </div>
      <div className="ml-[8px] flex h-full w-[73px] items-center justify-center border-b-3 border-[#e9ffb5] bg-[#4d4f50] pt-[3px]">
        <GitLogo className="-ml-[2px] size-9" line="#26282a" />
      </div>
      <span className="mt-[2px] ml-[138px] text-[17.2px] text-[#c2c2c2]">Desktop</span>
      <svg viewBox="0 0 12 10" className="mb-[34px] ml-[12px] h-[10px] w-3" fill="none" stroke="#fff" strokeWidth="1.5">
        <path d="m1 .5 4 4.500-4 4.500M6.500.5l4 4.500-4 4.500" />
      </svg>
      <svg viewBox="0 0 34 34" className="ml-[30px] size-[34px]">
        <defs>
          <linearGradient id="ball" x1="0" y1="0" x2="0" y2="1">
            <stop offset="0" stopColor="#fff3cf" />
            <stop offset="1" stopColor="#e0a63f" />
          </linearGradient>
          <clipPath id="ballClip">
            <circle cx="17" cy="17" r="16.5" />
          </clipPath>
        </defs>
        <circle cx="17" cy="17" r="16.5" fill="url(#ball)" />
        <g clipPath="url(#ballClip)" fill="#66686a">
          <path d="m17 10 7 5-2.700 8.500h-8.600L10 15Z" />
          <path d="m11 0 6 4 6-4Z" fill="#a5a5a5" />
          <path d="m0 9 5 4-1 6-4 1ZM34 9l-5 4 1 6 4 1Z" fill="#9b9b9b" />
          <path d="m3 27 6 0 3 8H3ZM31 27l-6 0-3 8h9Z" fill="#8b8880" />
        </g>
      </svg>
      <span className="mt-[2px] ml-[14px] w-[57px] text-[18.6px] font-medium whitespace-nowrap">Result</span>
      <svg viewBox="0 0 18 11" className="ml-[36px] h-[11px] w-[18px]" fill="none" stroke="#fff" strokeWidth="1.5">
        <path d="m.5 10 8.500-9 8.500 9" />
      </svg>
      <svg viewBox="0 0 23 18" className="ml-[16px] h-[18px] w-[23px]" fill="none" stroke="#fff" strokeWidth="1.3">
        <path d="M.7 5.500h3.500L9 1v16l-4.800-4.500H.7Z" />
        <path d="M12 6.500q2 2.500 0 5" />
        <path d="M15 4q4 5 0 10M18.500 1.500q6 7.500 0 15" stroke="#777" />
      </svg>
      <svg viewBox="0 0 23 14" className="ml-[13px] h-[14px] w-[23px]" fill="none">
        <rect x=".7" y=".7" width="20" height="12.6" stroke="#fff" strokeWidth="1.4" />
        <rect x="2.5" y="2.5" width="13" height="9" fill="#fff" />
        <path d="M22 4.500v5" stroke="#fff" strokeWidth="1.5" />
      </svg>
      <svg viewBox="0 0 21 21" className="ml-[20px] size-[21px]" fill="none" stroke="#fff" strokeWidth="1.3">
        <path d="M7 16 14.500 2q1.500-1.500 3 .5L10 16l-3.500 2.500ZM13 5l4 2M8 10C3 9 0 12 1 16c1 3 5 4 6 1M12 13c4-2 6-3 8-1" />
      </svg>
      <div className="mt-px ml-[20px] w-[99px] text-center text-[17.5px] leading-[28px] whitespace-nowrap">
        <div>09:06</div>
        <div>23/06/2024</div>
      </div>
      <svg viewBox="0 0 25 25" className="ml-[26px] size-[25px]" fill="none" stroke="#fff" strokeWidth="1.5">
        <path d="M1 1h23v18h-7.500L12.500 23.500 8.500 19H1Z" />
      </svg>
      <div className="mr-1.5 ml-auto h-full w-[2px] bg-[#6d6e6f]" />
    </div>
  );
}

export default function App() {
  return (
    <div className="relative h-[1080px] w-[1920px] overflow-hidden bg-[#101317]">
      <PeriodicTable />
      <DesktopIcons />
      <Installer />
      <Taskbar />
    </div>
  );
}
